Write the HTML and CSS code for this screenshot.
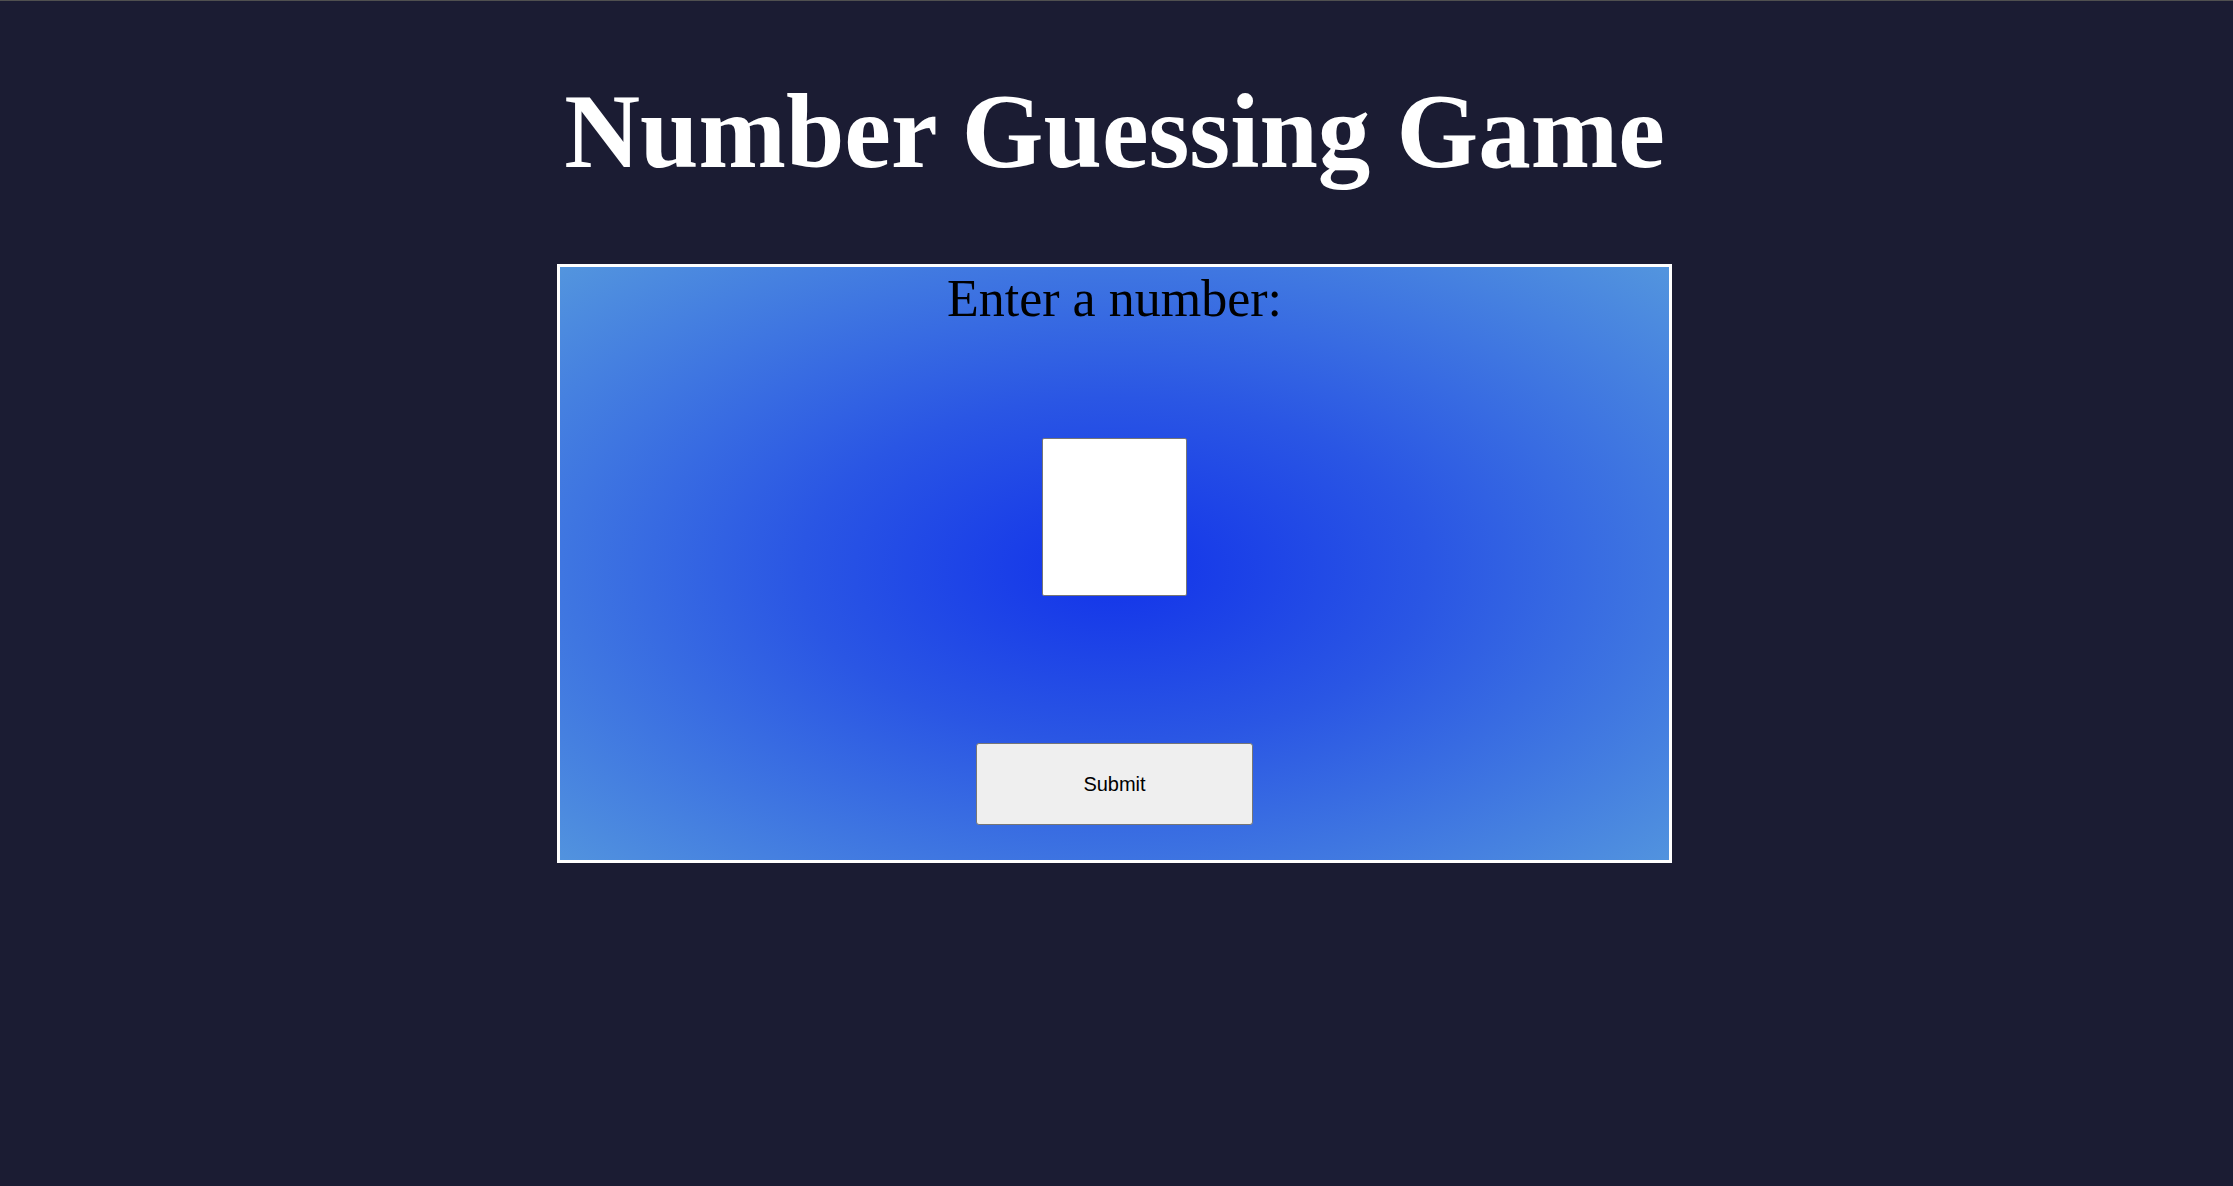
FILE: index.html
```html
<!DOCTYPE html>
<html lang="en">
<head>
<meta charset="utf-8">
<title>Number Guessing Game</title>
<link rel="stylesheet" href="styles.css">
</head>
<body>
<h1 class="title">Number Guessing Game</h1>
<div class="game">
  <label class="prompt" for="guess">Enter a number:</label>
  <input class="guess" id="guess" type="text">
  <button class="submit" type="button">Submit</button>
</div>
</body>
</html>
```
FILE: styles.css
```css
html {
  background: #1b1c33;
}
body {
  margin: 0;
  border-top: 1px solid #505050;
  background: #1b1c33;
  font-family: "Liberation Serif", "Times New Roman", serif;
  min-height: 1185px;
}
.title {
  margin: 70px 0 0;
  padding-right: 4px;
  text-align: center;
  color: #ffffff;
  font-size: 105px;
  font-weight: bold;
  line-height: normal;
}
.game {
  box-sizing: border-box;
  width: 1115px;
  height: 599px;
  margin: 72px auto 0;
  position: relative;
  left: -2px;
  border: 3px solid #ffffff;
  background: radial-gradient(ellipse at 50% 51%, #1233ea 0%, #2a56e4 40%, #5395de 100%);
  display: flex;
  flex-direction: column;
  align-items: center;
}
.prompt {
  margin-top: 2px;
  font-size: 52px;
  line-height: normal;
  color: #000000;
}
.guess {
  box-sizing: border-box;
  width: 145px;
  height: 158px;
  margin-top: 110px;
  border: 1px solid #767676;
  border-radius: 2px;
  background: #ffffff;
  padding: 0;
}
.submit {
  box-sizing: border-box;
  width: 277px;
  height: 82px;
  margin-top: 147px;
  border: 1px solid #767676;
  border-radius: 3px;
  background: #efefef;
  color: #000000;
  font-family: "Liberation Sans", Arial, sans-serif;
  font-size: 20px;
}
```
